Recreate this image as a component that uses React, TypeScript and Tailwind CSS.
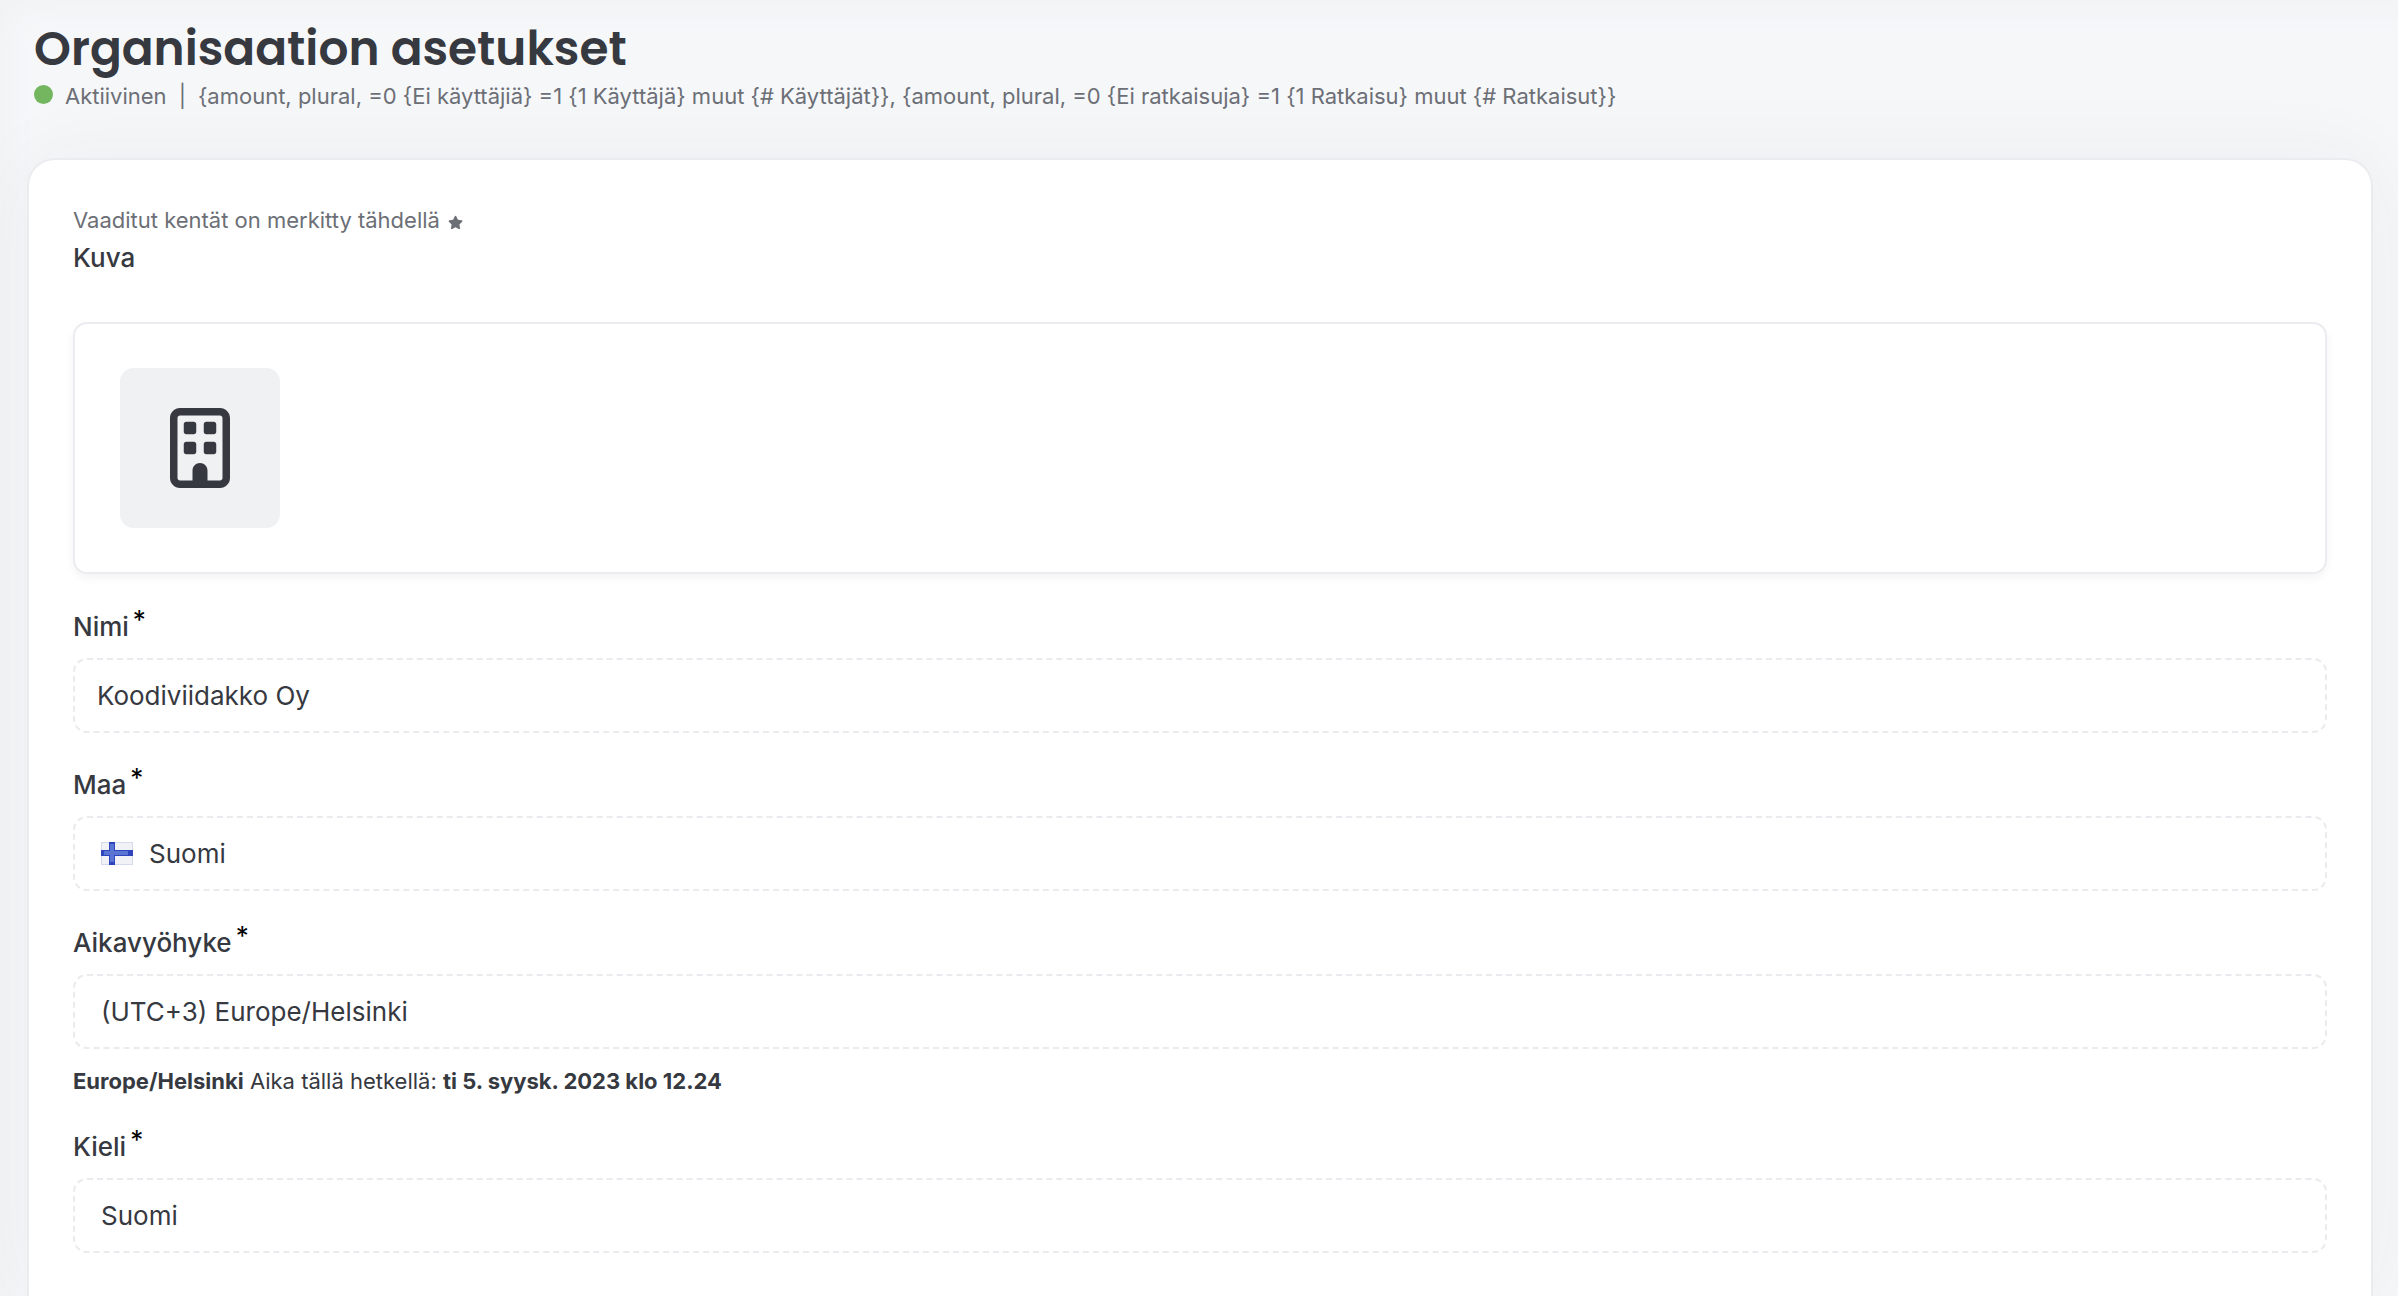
import type { ReactNode } from "react";
import { FaRegBuilding, FaStar } from "react-icons/fa6";

function FinlandFlag() {
  return (
    <svg viewBox="0 0 32 23" className="h-[23px] w-8 shrink-0" aria-hidden="true">
      <rect width="32" height="23" fill="#d5daea" />
      <rect x="1" y="1" width="30" height="21" fill="#f1f2f6" />
      <rect y="8" width="32" height="6" fill="#2f45bd" />
      <rect x="8" width="6" height="23" fill="#2f45bd" />
      <rect x="3" y="9" width="24" height="4" fill="#5a74d3" />
      <rect x="9" y="2" width="4" height="18" fill="#5a74d3" />
    </svg>
  );
}

function Field({
  id,
  label,
  help,
  children,
}: {
  id: string;
  label: string;
  help?: ReactNode;
  children: ReactNode;
}) {
  return (
    <div>
      <label htmlFor={id} className="mb-4 flex h-8 items-center gap-1 text-[26px] font-medium">
        {label}
        <span className="self-start leading-5 font-normal text-black">*</span>
      </label>
      <div className="flex h-[75px] items-center rounded-[14px] border-2 border-dashed border-[#ebebef] text-[26px]">
        {children}
      </div>
      {help}
    </div>
  );
}

export default function App() {
  return (
    <main className="flex min-h-screen flex-col bg-[#f6f7f9] pr-[25px] pl-[27px] font-[Inter,sans-serif] text-[#36393f] shadow-[inset_40px_40px_40px_-40px_#eff0f2]">
      <header className="pt-[21px] pl-[7px]">
        <h1 className="text-[47px] leading-14 font-semibold font-[Poppins,Inter,sans-serif]">
          Organisaation asetukset
        </h1>
        <div className="mt-[3px] flex h-8 items-center text-[22px] text-[#6c6f76]">
          <span className="mr-3 mb-1 size-[19px] rounded-full bg-[#73b65f]" />
          <span>Aktiivinen</span>
          <span className="mx-3">|</span>
          <span>
            {"{amount, plural, =0 {Ei käyttäjiä} =1 {1 Käyttäjä} muut {# Käyttäjät}}, {amount, plural, =0 {Ei ratkaisuja} =1 {1 Ratkaisu} muut {# Ratkaisut}}"}
          </span>
        </div>
      </header>

      <section className="mt-[46px] flex-1 rounded-t-[28px] border-2 border-b-0 border-[#ebecef] bg-white px-11 pt-11 shadow-[0_0_80px_rgba(50,55,60,0.05)]">
        <p className="mb-1 flex h-8 items-center gap-2 text-[22px] text-[#6c6f76]">
          Vaaditut kentät on merkitty tähdellä
          <FaStar className="mt-1 size-[15px]" />
        </p>
        <h2 className="text-[26px] leading-9 font-medium">Kuva</h2>

        <div className="mt-[46px] rounded-[14px] border-2 border-[#ebebf0] px-[45px] py-11 shadow-[0_4px_10px_rgba(0,0,0,0.05)]">
          <div className="flex size-40 items-center justify-center rounded-[14px] bg-[#f0f1f3]">
            <FaRegBuilding className="size-20" />
          </div>
        </div>

        <form className="mt-9 flex flex-col gap-[35px]">
          <Field id="name" label="Nimi">
            <input id="name" readOnly defaultValue="Koodiviidakko Oy" className="h-full w-full px-[22px] outline-none" />
          </Field>

          <Field id="country" label="Maa">
            <div className="flex h-full w-full items-center gap-4 px-[26px]">
              <FinlandFlag />
              <select id="country" className="h-full flex-1 appearance-none outline-none">
                <option>Suomi</option>
              </select>
            </div>
          </Field>

          <Field
            id="timezone"
            label="Aikavyöhyke"
            help={
              <p className="mt-[18px] text-[22px] leading-7">
                <strong>Europe/Helsinki</strong> Aika tällä hetkellä: <strong>ti 5. syysk. 2023 klo 12.24</strong>
              </p>
            }
          >
            <select id="timezone" className="h-full w-full appearance-none px-[26px] outline-none">
              <option>(UTC+3) Europe/Helsinki</option>
            </select>
          </Field>

          <Field id="language" label="Kieli">
            <select id="language" className="h-full w-full appearance-none px-[26px] outline-none">
              <option>Suomi</option>
            </select>
          </Field>
        </form>
      </section>
    </main>
  );
}
